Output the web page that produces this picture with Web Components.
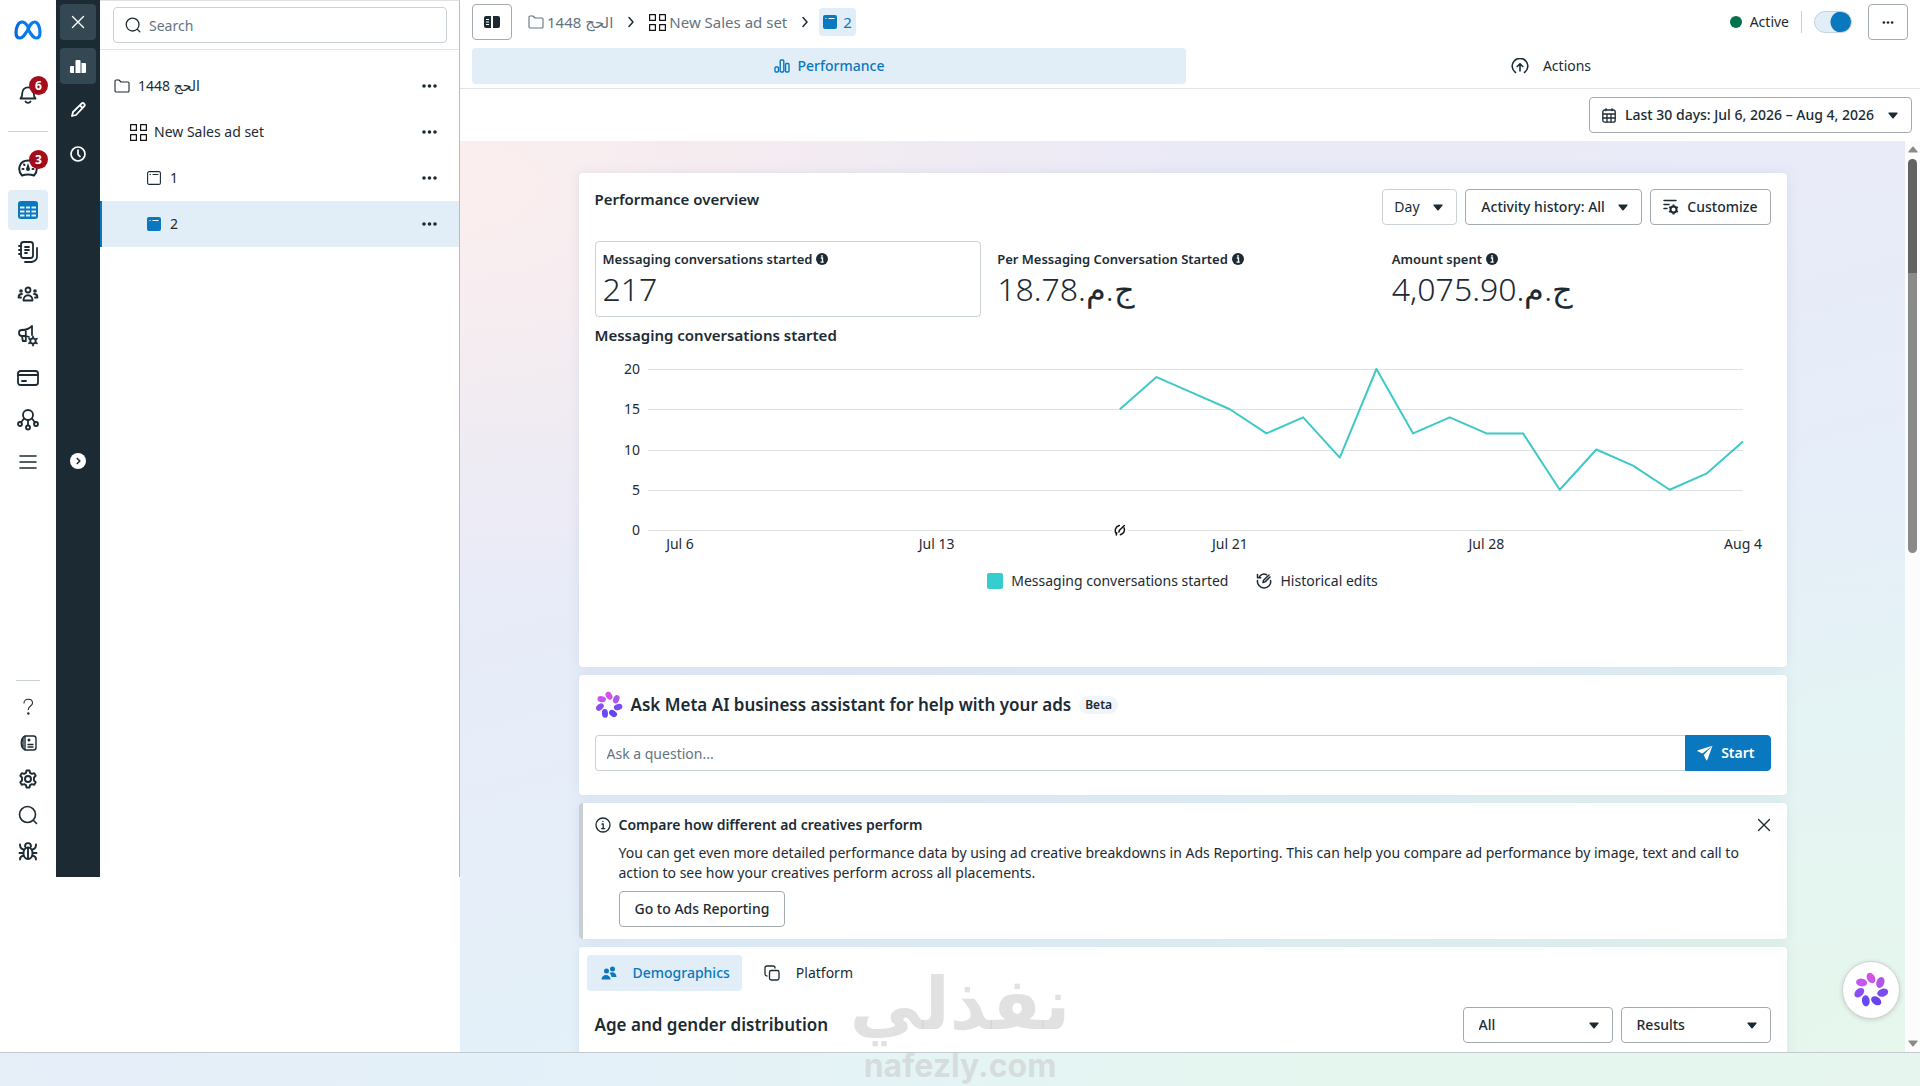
<!DOCTYPE html>
<html lang="en">
<head>
<meta charset="utf-8">
<meta name="viewport" content="width=device-width, initial-scale=1">
<title>Ads Manager</title>
<style>
  :root {
    --ink: #1c2b33;
    --muted: #65737e;
    --line: #cbd2d6;
    --line-strong: #a4abb0;
    --accent: #0a78be;
    --accent-soft: #e1edf7;
  }

  body {
    margin: 0;
    color: var(--ink);
    font: 14px/20px "Noto Sans", "DejaVu Sans", sans-serif;
  }
</style>
</head>
<body>
<ads-app></ads-app>

<script>
const stroke = (body, width = 2) =>
  `<g fill="none" stroke="currentColor" stroke-width="${width}" stroke-linecap="round" stroke-linejoin="round">${body}</g>`;

const gearPath = 'M8.5 1.5h3l.6 2.4 1.7 1 2.4-.7 1.5 2.6L16 8.500v3l1.700 1.700-1.500 2.600-2.400-.7-1.700 1-.6 2.400h-3l-.6-2.400-1.700-1-2.400.7-1.500-2.600L4 11.500v-3L2.300 6.800l1.500-2.600 2.400.7 1.700-1z';

const petals = ['#d052e6', '#b056ea', '#7a4cf0', '#6644ee', '#6a48f5', '#8a4ef5', '#c455f3']
  .map((color, i) => `<g transform="rotate(${i * 360 / 7})"><ellipse cx="0" cy="-12" rx="3.900" ry="5.600" fill="${color}" transform="rotate(-30 0 -12)"/></g>`)
  .join('');

// [viewBox, markup]
const ICONS = {
  meta: ['0 0 28 20', '<defs><linearGradient id="m" x1="0" x2="1"><stop offset="0" stop-color="#0668e1"/><stop offset=".5" stop-color="#0a7cf0"/><stop offset="1" stop-color="#0a7cf0"/></linearGradient></defs><path d="M14 6.500C12 3.500 10.500 2 8 2 4.500 2 2 7 2 12.500 2 16 3.500 18 6 18c3 0 5-3.500 8-8.500C16 5 17.500 2 20.500 2 24 2 26 7 26 12.500c0 3.500-1.500 5.500-3.800 5.500-2.700 0-4.200-2-8.200-8.700z" fill="none" stroke="url(#m)" stroke-width="3.200" stroke-linejoin="round"/>'],
  bell: ['0 0 20 20', stroke('<path d="M2.500 14.500C4 13 4.300 11.500 4.300 9a5.700 5.700 0 0 1 11.400 0c0 2.500.3 4 1.800 5.500z" stroke-width="1.800"/><path d="M7.500 17.500c1 1.800 4 1.800 5 0"/>', 1.8)],
  gauge: ['0 0 20 20', stroke('<path d="M4 17.500C-1 12 1 2.500 10 2.500s11 9.500 6 15c-4-1.200-8-1.200-12 0z"/><path d="M4.500 11h1M14.500 11h1M6 6.500l.5.500"/>') + '<path d="M10 5l2 6a2 2 0 1 1-4 0z" fill="currentColor"/>'],
  table: ['0 0 20 18', '<rect width="20" height="18" rx="3" fill="currentColor"/><path d="M2 5.500h4.500v2H2zM8 5.500h4v2H8zM13.500 5.500H18v2h-4.500zM2 9.500h4.500v2H2zM8 9.500h4v2H8zM13.500 9.500H18v2h-4.500zM2 13.500h4.500v2H2zM8 13.500h4v2H8zM13.500 13.500H18v2h-4.500z" fill="#e1edf7"/>'],
  notes: ['0 0 22 24', stroke('<rect x="4" y="2" width="12" height="16" rx="2.500"/><path d="M2 6h2M2 10h2M2 14h2M20 8v8a5.500 5.500 0 0 1-5.500 6H8M8 7h4M8 10h4M8 13h2"/>', 1.800)],
  people: ['0 0 22 16', stroke('<circle cx="11" cy="4" r="2.500"/><path d="M6.500 14.500c-.5-7 9.500-7 9 0zM1.500 11.500c0-3 1.500-3.500 3.500-3.500M1.500 11.500H4M20.500 11.500c0-3-1.500-3.500-3.500-3.500M20.500 11.500H18"/>', 1.800) + '<circle cx="4" cy="5" r="1.800" fill="currentColor"/><circle cx="18" cy="5" r="1.800" fill="currentColor"/>'],
  megaphone: ['0 0 22 22', stroke('<path d="M2 7.500C2 5.500 3.500 5 5 5c4 0 7-1 10-4v9M5 11c-2 0-3-1-3-3M5 11h4M5 11l.8 5h3V6M9 11l3 1" stroke-width="1.800"/><circle cx="16" cy="16" r="2.700"/><path d="M16 11.500v1M16 19.500v1M12.100 13.800l.9.500M19 17.700l.9.500M12.100 18.200l.9-.5M19 14.300l.9-.5"/>', 1.800)],
  card: ['0 0 22 16', stroke('<rect x="1" y="1" width="20" height="14" rx="2.500"/><path d="M1 5h20M5 11h4"/>', 1.800)],
  nodes: ['0 0 22 22', stroke('<circle cx="11" cy="6" r="5"/><path d="M11 11v5M7 9.500l-3 4M15 9.500l3 4"/><circle cx="11" cy="18.500" r="2"/><circle cx="3" cy="15" r="2"/><circle cx="19" cy="15" r="2"/>', 1.800)],
  menu: ['0 0 20 20', stroke('<path d="M2 4h16M2 10h16M2 16h16"/>', 1.600)],
  question: ['0 0 18 18', stroke('<path d="M5 5c0-5 8.500-5 8.500 0 0 3-4.200 3-4.200 6.500"/>', 1.100) + '<circle cx="9.300" cy="15.500" r="1.200" fill="currentColor"/>'],
  news: ['0 0 18 18', stroke('<path d="M6 2h8.500A2.500 2.500 0 0 1 17 4.500v9a2.500 2.500 0 0 1-2.500 2.500H6zM6 2C1 4.500 1 13.500 6 16M4 4v10M9 10.500h5M9 13h5"/><circle cx="10" cy="6" r=".8"/>', 1.400)],
  gear: ['0 0 20 20', stroke(`<path d="${gearPath}"/><circle cx="10" cy="10" r="3"/>`, 1.900)],
  search: ['0 0 20 20', stroke('<circle cx="9.500" cy="9.500" r="8"/><path d="M15.500 15.500l3 3"/>', 1.600)],
  bug: ['0 0 20 20', stroke('<path d="M10 18c-6 0-6-11.500 0-11.500S16 18 10 18zM10 7v11M7 5.500C7 1 13 1 13 5.500M1.500 12H5M15 12h3.500M2 3.500c0 3.500 1 4.500 3.500 5M18 3.500c0 3.500-1 4.500-3.500 5M2 18.500c0-2.500 1-3.500 3.500-4M18 18.500c0-2.500-1-3.500-3.500-4"/>', 1.900)],
  close: ['0 0 14 14', stroke('<path d="M1.500 1.500l11 11M12.500 1.500l-11 11"/>', 1.400)],
  bars: ['0 0 16 14', '<path d="M0 8a1 1 0 0 1 1-1h3v7H1a1 1 0 0 1-1-1zM5.500 2a1 1 0 0 1 1-1h3a1 1 0 0 1 1 1v12h-5zM11.500 4H15a1 1 0 0 1 1 1v8a1 1 0 0 1-1 1h-3.500z" fill="currentColor"/>'],
  barsOutline: ['0 0 16 14', stroke('<rect x="1" y="8" width="3.500" height="5" rx="1"/><rect x="6.200" y="1" width="3.600" height="12" rx="1"/><rect x="11.500" y="4.500" width="3.500" height="8.500" rx="1"/>', 1.400)],
  pencil: ['0 0 16 16', stroke('<path d="M2 14l1-4L11.500 1.700a1.600 1.600 0 0 1 2.600 2.600L6 13zM10 3.500L12.500 6"/>', 1.800)],
  clock: ['0 0 16 16', stroke('<circle cx="8" cy="8" r="7"/><path d="M8 4v4.500l2 2"/>', 1.700)],
  chevronCircle: ['0 0 16 16', '<circle cx="8" cy="8" r="8" fill="#fff"/><path d="M6.800 5l3 3-3 3" fill="none" stroke="#1c2b33" stroke-width="1.500"/>'],
  chevron: ['0 0 8 12', stroke('<path d="M2 1.500L6 6l-4 4.500"/>', 1.500)],
  folder: ['0 0 16 14', stroke('<path d="M1 2a1 1 0 0 1 1-1h3l2 2h7a1 1 0 0 1 1 1v8a1 1 0 0 1-1 1H2a1 1 0 0 1-1-1z"/>', 1.100)],
  grid: ['0 0 17 17', '<path d="M.6.6h5.800v5.800H.6zM10.600.6h5.800v5.800h-5.800zM.6 10.600h5.800v5.800H.6zM10.600 10.600h5.800v5.800h-5.800z" fill="none" stroke="#111" stroke-width="1.200" stroke-linejoin="round"/>'],
  window: ['0 0 14 14', stroke('<rect x=".6" y=".6" width="12.800" height="12.800" rx="1.500"/><path d="M3 3.500h.5M6 3.500h5"/>', 1.100)],
  windowFill: ['0 0 14 14', '<rect width="14" height="14" rx="2" fill="currentColor"/><path d="M2.500 3.500h1M5.500 3.500h6" stroke="#fff" stroke-width="1.200"/>'],
  dots: ['0 0 15 4', '<g fill="currentColor"><circle cx="2" cy="2" r="1.800"/><circle cx="7.500" cy="2" r="1.800"/><circle cx="13" cy="2" r="1.800"/></g>'],
  panel: ['0 0 16 12', '<path d="M2 0h5v12H2a2 2 0 0 1-2-2V2a2 2 0 0 1 2-2zM9 0h5a2 2 0 0 1 2 2v8a2 2 0 0 1-2 2H9z" fill="currentColor"/><path d="M2 3.500h3M2 6h3M2 8.500h3" stroke="#fff" stroke-width="1.200"/>'],
  upload: ['0 0 18 16', stroke('<path d="M4.500 14.500a7.800 7.800 0 1 1 9 0M9 13V6M6.200 8.500L9 5.700l2.800 2.800"/>', 1.600)],
  calendar: ['0 0 14 15', stroke('<rect x=".8" y="2" width="12.400" height="12.200" rx="2"/><path d="M1 6h12M1 10h12M5 6v8M9 6v8M4 .7v2M10 .7v2"/>', 1.300)],
  caret: ['0 0 10 7', '<path d="M1 .5h8a.6.6 0 0 1 .5 1L5.600 6.200a.8.8 0 0 1-1.200 0L.5 1.500A.6.6 0 0 1 1 .5z" fill="currentColor"/>'],
  customize: ['0 0 16 16', stroke('<path d="M1 1.500h12M1 5.500h5M1 9.500h3"/>', 1.500) + '<circle cx="10.500" cy="10.500" r="3" fill="none" stroke="currentColor" stroke-width="2"/><path d="M10.500 5.500v2M10.500 13.500v2M6.200 8l1.700 1M13.100 12l1.700 1M6.200 13l1.700-1M13.100 9l1.700-1" stroke="currentColor" stroke-width="2"/>'],
  infoFill: ['0 0 12 12', '<circle cx="6" cy="6" r="6" fill="currentColor"/><path d="M4.800 5h1.700v4M4.500 9.200h3.200" stroke="#fff" stroke-width="1.300" fill="none"/><circle cx="6" cy="2.900" r=".9" fill="#fff"/>'],
  info: ['0 0 16 16', stroke('<circle cx="8" cy="8" r="7"/><path d="M7 7h1.200v4.500M6.500 11.600h3.200"/><path d="M8 4.300v.2"/>', 1.300)],
  history: ['0 0 16 16', stroke('<path d="M3.500 3.500C6 .5 9 1 10.500 1.700M1.500 1.500v3.200h3.200M1.500 7.500C.8 11 4 15 8 15s7.500-3.500 6.500-7.500M7 9.500l.5-2.200L13 2M7 9.500l2-.6L14 4"/>', 1.500)],
  edit: ['0 0 12 12', stroke('<path d="M2 9C.5 6.500 1.500 2.500 5.500 1.500M10.300 4c1 3-.5 6-3.800 6.700M5 8l.6-1.800L10.500 1.500M2.500 11l.3-2.200" stroke="#111"/>', 1.500)],
  send: ['0 0 16 16', '<path d="M15.500.7L.8 5.200a.6.6 0 0 0-.1 1.100l4.600 2.200zM15.500.7L10.300 15a.6.600 0 0 1-1.100.1L6.700 10z" fill="currentColor"/>'],
  users: ['0 0 16 14', '<g fill="currentColor"><circle cx="5.500" cy="5" r="2.500"/><circle cx="11.500" cy="3" r="2.500"/><path d="M.5 13.500c0-6 9-6 9 0zM8.500 7c3-2 7-.5 7 4h-5C10.300 9 9.500 8 8.500 7z"/></g>'],
  copy: ['0 0 16 16', stroke('<rect x="5.500" y="5.500" width="9.500" height="9.500" rx="1.800"/><path d="M3 11a2 2 0 0 1-2-2V3a2 2 0 0 1 2-2h6a2 2 0 0 1 2 2"/>', 1.300)],
  assistant: ['-18 -18 36 36', petals]
};

class BaseElement extends HTMLElement {
  connectedCallback() {
    if (this.shadowRoot) return;
    this.attachShadow({ mode: 'open' });
    const template = document.createElement('template');
    template.innerHTML = this.template();
    this.shadowRoot.appendChild(template.content.cloneNode(true));
  }

  attr(name, fallback = '') {
    return this.getAttribute(name) || fallback;
  }
}

class UiIcon extends BaseElement {
  template() {
    const [box, body] = ICONS[this.attr('name')];
    const size = box.split(' ').map(Number);
    const width = Number(this.attr('width', size[2]));
    const height = Math.round(width * size[3] / size[2]);
    return `
      <style>
        :host { display: inline-flex; flex: none; }
        svg { flex: none; }
      </style>
      <svg viewBox="${box}" width="${width}" height="${height}" aria-hidden="true">${body}</svg>
    `;
  }
}

class UiButton extends BaseElement {
  template() {
    return `
      <style>
        :host { display: inline-flex; flex: none; }
        button {
          display: flex;
          align-items: center;
          justify-content: center;
          gap: 8px;
          box-sizing: border-box;
          height: 36px;
          min-width: 40px;
          padding: 0 var(--pad, 15px);
          border: 1px solid var(--line-strong);
          border-radius: 4px;
          background: #fff;
          color: var(--ink);
          font: inherit;
          font-weight: 500;
        }
        :host([variant="primary"]) button {
          border-color: var(--accent);
          border-radius: 0 4px 4px 0;
          background: var(--accent);
          color: #fff;
          font-weight: 600;
          padding: 0 15px 0 11px;
        }
        :host([variant="plain"]) button {
          min-width: 0;
          height: 20px;
          padding: 0;
          border: 0;
          background: none;
        }
      </style>
      <button type="button" aria-label="${this.attr('label')}"><slot></slot></button>
    `.replace('aria-label=""', '');
  }
}

class UiSelect extends BaseElement {
  template() {
    const icon = this.attr('icon');
    return `
      <style>
        :host { display: inline-grid; flex: none; align-items: center; }
        select, .caret, .icon { grid-area: 1 / 1; }
        select {
          appearance: none;
          box-sizing: border-box;
          width: 100%;
          height: 36px;
          margin: 0;
          padding: 0 36px 0 ${icon ? 35 : this.attr('pad', '15')}px;
          border: 1px solid var(--select-line, var(--line-strong));
          border-radius: 4px;
          background: #fff;
          color: var(--ink);
          font: inherit;
          font-weight: var(--select-weight, 500);
        }
        .caret { justify-self: end; margin-right: 14px; pointer-events: none; }
        .icon { justify-self: start; margin-left: 13px; pointer-events: none; }
      </style>
      <select aria-label="${this.attr('label')}"><option>${this.attr('value')}</option></select>
      ${icon ? `<ui-icon class="icon" name="${icon}"></ui-icon>` : ''}
      <ui-icon class="caret" name="caret"></ui-icon>
    `;
  }
}

class UiCard extends BaseElement {
  template() {
    return `
      <style>
        :host {
          display: block;
          border-radius: 4px;
          background: #fff;
          box-shadow: 0 0 12px rgba(60, 110, 160, .1);
        }
      </style>
      <slot></slot>
    `;
  }
}

class SideNav extends BaseElement {
  template() {
    const item = (name, label, extra = '') =>
      `<a href="#" class="${extra}" aria-label="${label}"><ui-icon name="${name}"></ui-icon></a>`;
    return `
      <style>
        :host {
          display: flex;
          flex-direction: column;
          box-sizing: border-box;
          width: 56px;
          padding: 10px 8px 8px;
          background: #fff;
        }
        nav { display: flex; flex-direction: column; gap: 2px; }
        nav.bottom { gap: 0; margin-top: auto; }
        a {
          display: flex;
          align-items: center;
          justify-content: center;
          height: 40px;
          border-radius: 4px;
          color: var(--ink);
        }
        a.active { background: var(--accent-soft); color: var(--accent); }
        .bottom a { height: 36px; }
        .badged { display: grid; grid-template: 40px / 40px; place-items: center; }
        .badged > * { grid-area: 1 / 1; }
        .badge {
          place-self: start end;
          margin-top: 2px;
          width: 19px;
          height: 19px;
          border-radius: 50%;
          background: #a30d1c;
          color: #fff;
          font-size: 12px;
          line-height: 19px;
          font-weight: 700;
          text-align: center;
        }
        hr { width: 100%; margin: 15px 0 14px; border: 0; border-top: 1px solid var(--line); }
        .bottom hr { width: 24px; margin: 0 auto 8px; }
        .alerts { margin-top: 22px; }
      </style>
      <nav aria-label="Main">
        ${item('meta', 'Home')}
        <a href="#" class="badged alerts" aria-label="Notifications"><ui-icon name="bell"></ui-icon><span class="badge">6</span></a>
        <hr>
        <a href="#" class="badged" aria-label="Account overview"><ui-icon name="gauge"></ui-icon><span class="badge">3</span></a>
        ${item('table', 'Campaigns', 'active')}
        ${item('notes', 'Ads Reporting')}
        ${item('people', 'Audiences')}
        ${item('megaphone', 'Advertising settings')}
        ${item('card', 'Billing')}
        ${item('nodes', 'Events Manager')}
        ${item('menu', 'All tools')}
      </nav>
      <nav class="bottom" aria-label="Support">
        <hr>
        ${item('question', 'Help')}
        ${item('news', 'News')}
        ${item('gear', 'Settings')}
        ${item('search', 'Search')}
        ${item('bug', 'Report a problem')}
      </nav>
    `;
  }
}

class ToolRail extends BaseElement {
  template() {
    return `
      <style>
        :host {
          display: flex;
          flex-direction: column;
          box-sizing: border-box;
          width: 44px;
          padding: 4px;
          background: #1c2b33;
        }
        button {
          display: flex;
          align-items: center;
          justify-content: center;
          flex: none;
          width: 36px;
          height: 36px;
          padding: 0;
          border: 0;
          border-radius: 4px;
          background: none;
          color: #fff;
        }
        .on { background: #344854; }
        .expand { margin: auto 0; }
        .top { display: flex; flex-direction: column; gap: 8px; height: 44px; }
      </style>
      <div class="top">
        <button class="on" aria-label="Close"><ui-icon name="close"></ui-icon></button>
        <button class="on" aria-label="Charts"><ui-icon name="bars"></ui-icon></button>
        <button aria-label="Edit"><ui-icon name="pencil"></ui-icon></button>
        <button aria-label="History"><ui-icon name="clock"></ui-icon></button>
      </div>
      <button class="expand" aria-label="Expand"><ui-icon name="chevronCircle"></ui-icon></button>
    `;
  }
}

class TreeRow extends BaseElement {
  template() {
    return `
      <style>
        :host {
          display: flex;
          align-items: center;
          gap: 8px;
          box-sizing: border-box;
          height: 46px;
          padding: 0 22px 0 calc(14px + 16px * var(--level, 0));
        }
        :host([selected]) {
          background: var(--accent-soft);
          box-shadow: inset 2px 0 var(--accent);
        }
        .kind { width: 16px; justify-content: center; }
        :host([selected]) .kind { color: var(--accent); }
        button {
          display: flex;
          margin-left: auto;
          padding: 8px 0;
          border: 0;
          background: none;
          color: var(--ink);
        }
      </style>
      <ui-icon class="kind" name="${this.attr('icon')}"></ui-icon>
      <span><slot></slot></span>
      <button type="button" aria-label="More"><ui-icon name="dots"></ui-icon></button>
    `;
  }
}

class AdTree extends BaseElement {
  template() {
    return `
      <style>
        :host {
          display: block;
          box-sizing: border-box;
          width: 360px;
          border-top: 1px solid #dfe3e6;
          border-right: 1px solid #b8bcc0;
          background: #fff;
        }
        .search {
          display: grid;
          align-items: center;
          padding: 6px 12px 6px 13px;
          border-bottom: 1px solid #e2e5e8;
        }
        .search > * { grid-area: 1 / 1; }
        .search ui-icon { margin-left: 12px; }
        input {
          box-sizing: border-box;
          width: 100%;
          height: 36px;
          padding: 0 12px 0 35px;
          border: 1px solid var(--line);
          border-radius: 4px;
          color: var(--ink);
          font: inherit;
        }
        input::placeholder { color: var(--muted); }
        .rows { padding-top: 13px; }
      </style>
      <div class="search">
        <input type="text" placeholder="Search" aria-label="Search">
        <ui-icon name="search" width="16"></ui-icon>
      </div>
      <div class="rows">
        <tree-row icon="folder">الحج 1448</tree-row>
        <tree-row icon="grid" style="--level: 1">New Sales ad set</tree-row>
        <tree-row icon="window" style="--level: 2">1</tree-row>
        <tree-row icon="windowFill" style="--level: 2" selected>2</tree-row>
      </div>
    `;
  }
}

class PageHeader extends BaseElement {
  template() {
    return `
      <style>
        :host { display: block; background: #fff; }
        .bar {
          display: flex;
          align-items: center;
          gap: 16px;
          padding: 4px 12px;
        }
        .crumbs { display: flex; align-items: center; gap: 14px; }
        .crumbs a {
          display: flex;
          align-items: center;
          gap: 3px;
          color: var(--muted);
          font-size: 15px;
          text-decoration: none;
        }
        .crumbs a.here {
          gap: 6px;
          height: 28px;
          margin-left: -4px;
          padding: 0 4px;
          border-radius: 4px;
          background: var(--accent-soft);
          color: var(--accent);
        }
        .crumbs ui-icon[name="chevron"] { color: var(--ink); }
        .status { display: flex; align-items: center; margin-left: auto; }
        .dot { width: 12px; height: 12px; margin-right: 8px; border-radius: 50%; background: #04724d; }
        .rule { width: 1px; height: 22px; margin: 0 12px; background: var(--line); }
        input {
          appearance: none;
          box-sizing: border-box;
          width: 38px;
          height: 22px;
          margin: 0;
          border: 1px solid #c3d2de;
          border-radius: 11px;
          background: radial-gradient(circle at 26px 10px, var(--accent) 10px, #e1edf7 11px);
        }
        .tabs {
          display: grid;
          grid-template-columns: 1fr 1fr;
          gap: 8px;
          padding: 4px 12px;
          border-bottom: 1px solid #e2e5e8;
        }
        .tabs button {
          display: flex;
          align-items: center;
          justify-content: center;
          gap: 8px;
          height: 36px;
          padding: 0;
          border: 0;
          border-radius: 4px;
          background: none;
          color: var(--ink);
          font: inherit;
        }
        .tabs button + button { gap: 14px; }
        .tabs .on { background: var(--accent-soft); color: var(--accent); font-weight: 500; }
        .range { display: flex; justify-content: flex-end; padding: 8px; }
      </style>
      <div class="bar">
        <ui-button label="Toggle panel" style="--pad: 0"><ui-icon name="panel"></ui-icon></ui-button>
        <nav class="crumbs" aria-label="Breadcrumb">
          <a href="#"><ui-icon name="folder"></ui-icon><span>الحج 1448</span></a>
          <ui-icon name="chevron"></ui-icon>
          <a href="#"><ui-icon name="grid"></ui-icon>New Sales ad set</a>
          <ui-icon name="chevron"></ui-icon>
          <a href="#" class="here"><ui-icon name="windowFill"></ui-icon>2</a>
        </nav>
        <div class="status">
          <span class="dot"></span>
          <label for="active">Active</label>
          <span class="rule"></span>
          <input id="active" type="checkbox" role="switch" checked>
        </div>
        <ui-button label="More" style="--pad: 0"><ui-icon name="dots" width="12"></ui-icon></ui-button>
      </div>
      <div class="tabs" role="tablist">
        <button class="on" role="tab" aria-selected="true"><ui-icon name="barsOutline"></ui-icon>Performance</button>
        <button role="tab"><ui-icon name="upload"></ui-icon>Actions</button>
      </div>
      <div class="range">
        <ui-select icon="calendar" label="Date range" value="Last 30 days: Jul 6, 2026 – Aug 4, 2026"></ui-select>
      </div>
    `;
  }
}

class MetricTile extends BaseElement {
  template() {
    return `
      <style>
        :host {
          display: block;
          box-sizing: border-box;
          height: 76px;
          padding: 7px;
          border: 1px solid transparent;
          border-radius: 4px;
        }
        :host([selected]) { border-color: var(--line); }
        .label { display: flex; align-items: center; gap: 4px; font-size: 13px; font-weight: 600; }
        .value { font-size: 32px; line-height: 40px; font-weight: 300; }
      </style>
      <div class="label">${this.attr('label')}<ui-icon name="infoFill"></ui-icon></div>
      <div class="value"><slot></slot></div>
    `;
  }
}

class LineChart extends BaseElement {
  template() {
    const values = JSON.parse(this.attr('values'));
    const start = Number(this.attr('start'));
    const days = 30;
    const top = 24;
    const plot = 161;
    // the first day sits a little in from the axis, the last one on the right edge
    const x = (day) => 32 + day * (1095 - 32) / (days - 1);
    const percent = (day) => x(day) / 10.95 + '%';
    const y = (value) => plot - value * plot / 20;
    const ticks = [20, 15, 10, 5, 0].map((value) => {
      const at = Math.round(top + y(value));
      return `<line x1="0" x2="100%" y1="${at}.5" y2="${at}.5"/><text class="y" x="-8" y="${at + 5}">${value}</text>`;
    }).join('');
    const labels = [[0, 'Jul 6'], [7, 'Jul 13'], [15, 'Jul 21'], [22, 'Jul 28'], [29, 'Aug 4']]
      .map(([day, text]) => `<text class="x" x="${percent(day)}" y="204">${text}</text>`).join('');
    const points = values.map((value, i) => `${x(start + i)},${y(value)}`).join(' ');
    return `
      <style>
        :host { display: block; }
        .plot { margin: 0 28px 0 53px; }
        .plot > svg { display: block; width: 100%; height: 210px; overflow: visible; }
        line { stroke: #dfe1e3; }
        text { fill: var(--ink); }
        .y { text-anchor: end; }
        .x { text-anchor: middle; }
        .series { fill: none; stroke: #3ec8c8; stroke-width: 2; stroke-linejoin: round; vector-effect: non-scaling-stroke; }
        .legend { display: flex; justify-content: center; gap: 28px; margin-top: 16px; }
        .legend span { display: flex; align-items: center; gap: 8px; }
        .swatch { width: 16px; height: 16px; border-radius: 2px; background: #35cdcd; }
      </style>
      <div class="plot">
        <svg role="img" aria-label="${this.attr('label')}">
          ${ticks}
          ${labels}
          <svg y="${top}" width="100%" height="${plot}" viewBox="0 0 1095 ${plot}" preserveAspectRatio="none" overflow="visible">
            <polyline class="series" points="${points}"/>
          </svg>
          <svg x="${percent(start)}" y="${top + plot}" overflow="visible">
            <g transform="translate(-6 -6)">
              <circle cx="6" cy="6" r="8" fill="#fff"/>
              ${ICONS.edit[1]}
            </g>
          </svg>
        </svg>
      </div>
      <div class="legend">
        <span><i class="swatch"></i>${this.attr('label')}</span>
        <span><ui-icon name="history"></ui-icon>Historical edits</span>
      </div>
    `;
  }
}

class OverviewCard extends BaseElement {
  template() {
    return `
      <style>
        :host { display: block; }
        .body { padding: 16px 16px 76px; }
        header { display: flex; gap: 8px; margin-bottom: 16px; }
        h2, h3 { margin: 0; font-size: 15px; line-height: 20px; font-weight: 600; }
        h2 { margin-right: auto; }
        h3 { margin-top: 8px; }
        .metrics { display: grid; grid-template-columns: repeat(3, 1fr); gap: 8px; }
      </style>
      <ui-card><div class="body">
        <header>
          <h2>Performance overview</h2>
          <ui-select label="Breakdown" value="Day" pad="11" style="--select-line: var(--line); --select-weight: 400"></ui-select>
          <ui-select label="Activity history" value="Activity history: All"></ui-select>
          <ui-button style="--pad: 12px"><ui-icon name="customize"></ui-icon>Customize</ui-button>
        </header>
        <div class="metrics">
          <metric-tile label="Messaging conversations started" selected>217</metric-tile>
          <metric-tile label="Per Messaging Conversation Started">ج.م.18.78</metric-tile>
          <metric-tile label="Amount spent">ج.م.4,075.90</metric-tile>
        </div>
        <h3>Messaging conversations started</h3>
        <line-chart label="Messaging conversations started" start="12"
          values="[15,19,17,15,12,14,9,20,12,14,12,12,5,10,8,5,7,11]"></line-chart>
      </div></ui-card>
    `;
  }
}

class AssistantCard extends BaseElement {
  template() {
    return `
      <style>
        :host { display: block; }
        .body { padding: 16px 16px 24px; }
        header { display: flex; align-items: center; gap: 8px; height: 28px; margin-bottom: 16px; }
        h2 { margin: 0; font-size: 17px; line-height: 24px; font-weight: 600; }
        .beta {
          padding: 0 6px;
          border-radius: 9px;
          background: #f0f5fa;
          font-size: 12px;
          line-height: 18px;
          font-weight: 600;
        }
        form { display: flex; }
        input {
          flex: 1;
          box-sizing: border-box;
          height: 36px;
          padding: 0 11px;
          border: 1px solid var(--line);
          border-right: 0;
          border-radius: 4px 0 0 4px;
          color: var(--ink);
          font: inherit;
        }
        input::placeholder { color: var(--muted); }
      </style>
      <ui-card><div class="body">
        <header>
          <ui-icon name="assistant" width="28"></ui-icon>
          <h2>Ask Meta AI business assistant for help with your ads</h2>
          <span class="beta">Beta</span>
        </header>
        <form>
          <input type="text" placeholder="Ask a question..." aria-label="Ask a question">
          <ui-button variant="primary"><ui-icon name="send"></ui-icon>Start</ui-button>
        </form>
      </div></ui-card>
    `;
  }
}

class TipCard extends BaseElement {
  template() {
    return `
      <style>
        :host { display: block; }
        .body {
          display: grid;
          grid-template-columns: 16px 1fr 14px;
          gap: 8px;
          padding: 12px 16px 12px 12px;
          border-left: 4px solid #c8ced2;
          border-radius: 4px;
        }
        .body > ui-icon, .body > ui-button { height: 20px; align-items: center; }
        h2 { margin: 0; font-size: 14px; line-height: 20px; font-weight: 600; }
        p { margin: 0; }
        .text { grid-column: 2; display: grid; justify-items: start; gap: 8px; }
      </style>
      <ui-card><div class="body">
        <ui-icon name="info"></ui-icon>
        <h2>Compare how different ad creatives perform</h2>
        <ui-button variant="plain" label="Dismiss"><ui-icon name="close"></ui-icon></ui-button>
        <div class="text">
          <p>You can get even more detailed performance data by using ad creative breakdowns in Ads Reporting. This can help you compare ad performance by image, text and call to action to see how your creatives perform across all placements.</p>
          <ui-button>Go to Ads Reporting</ui-button>
        </div>
      </div></ui-card>
    `;
  }
}

class AudienceCard extends BaseElement {
  template() {
    return `
      <style>
        :host { display: block; }
        .body { padding: 8px 16px 240px 8px; }
        .tabs { display: flex; gap: 8px; margin-bottom: 16px; }
        .tabs button {
          display: flex;
          align-items: center;
          gap: 16px;
          height: 36px;
          padding: 0 12px 0 14px;
          border: 0;
          border-radius: 4px;
          background: none;
          color: var(--ink);
          font: inherit;
        }
        .tabs .on { background: var(--accent-soft); color: var(--accent); font-weight: 500; }
        .row { display: flex; align-items: center; gap: 8px; padding-left: 8px; }
        h2 { margin: 0 auto 0 0; font-size: 17px; line-height: 24px; font-weight: 600; }
        ui-select { width: 150px; }
      </style>
      <ui-card><div class="body">
        <div class="tabs" role="tablist">
          <button class="on" role="tab" aria-selected="true"><ui-icon name="users"></ui-icon>Demographics</button>
          <button role="tab"><ui-icon name="copy"></ui-icon>Platform</button>
        </div>
        <div class="row">
          <h2>Age and gender distribution</h2>
          <ui-select label="Breakdown" value="All"></ui-select>
          <ui-select label="Metric" value="Results"></ui-select>
        </div>
      </div></ui-card>
    `;
  }
}

class ScrollTrack extends BaseElement {
  template() {
    return `
      <style>
        :host {
          display: flex;
          flex-direction: column;
          align-items: center;
          flex: none;
          box-sizing: border-box;
          width: 15px;
          padding: 5px 0;
          background: #fcfcfc;
          color: #8a8a8a;
        }
        .up { transform: rotate(180deg); }
        .lane { flex: 1; width: 9px; margin: 6px 0; }
        .thumb {
          height: 45%;
          border-radius: 5px;
          background: linear-gradient(#636363 29%, #8a8a8a 29%);
        }
      </style>
      <ui-icon class="up" name="caret"></ui-icon>
      <div class="lane"><div class="thumb"></div></div>
      <ui-icon name="caret"></ui-icon>
    `;
  }
}

class AdsApp extends BaseElement {
  template() {
    return `
      <style>
        :host {
          position: relative;
          display: flex;
          flex-direction: column;
          height: 100vh;
          overflow: hidden;
          background: linear-gradient(90deg, #e6eef8, #e4f1f9 30%, #e5f6f0 65%, #e6f6ee);
        }
        .frame {
          display: flex;
          flex: 1;
          min-height: 0;
          margin-bottom: 33px;
          border-bottom: 1px solid #c3cbd1;
          background: #fff;
        }
        .side { display: flex; flex: none; margin-bottom: 175px; }
        main { display: flex; flex-direction: column; flex: 1; min-width: 0; }
        .scroll { display: flex; flex: 1; min-height: 0; }
        .content {
          flex: 1;
          min-width: 0;
          overflow: hidden;
          padding: 32px 16px 0;
          background:
            radial-gradient(ellipse 50% 45% at 0 5%, #fbeeee, transparent),
            radial-gradient(ellipse 75% 60% at 100% 100%, #e6f7ec, transparent),
            linear-gradient(165deg, #ece9f5, #e7ebf8 40%, #e4f1f9 72%);
        }
        .cards {
          display: flex;
          flex-direction: column;
          gap: 8px;
          max-width: 1208px;
          margin: 0 auto;
        }
        .fab {
          position: absolute;
          right: 20px;
          bottom: 67px;
          display: flex;
          align-items: center;
          justify-content: center;
          width: 58px;
          height: 58px;
          padding: 0;
          border: 1px solid #d0d4d8;
          border-radius: 50%;
          background: #fff;
          box-shadow: 0 1px 5px rgba(0, 0, 0, .15);
        }
        .mark {
          position: absolute;
          left: 50%;
          bottom: 0;
          transform: translateX(-50%);
          color: rgba(205, 205, 205, .6);
          font-family: "DejaVu Sans", sans-serif;
          font-weight: 700;
          text-align: center;
          pointer-events: none;
        }
        .mark b { display: block; font-size: 72px; line-height: 84px; }
        .mark span { display: block; font: 700 32px/40px Inter, sans-serif; }
      </style>
      <div class="frame">
        <div class="side">
          <side-nav></side-nav>
          <tool-rail></tool-rail>
          <ad-tree></ad-tree>
        </div>
        <main>
          <page-header></page-header>
          <div class="scroll">
            <div class="content">
              <div class="cards">
                <overview-card></overview-card>
                <assistant-card></assistant-card>
                <tip-card></tip-card>
                <audience-card></audience-card>
              </div>
            </div>
            <scroll-track></scroll-track>
          </div>
        </main>
      </div>
      <button class="fab" type="button" aria-label="Open assistant"><ui-icon name="assistant" width="36"></ui-icon></button>
      <div class="mark"><b>نفذلي</b><span>nafezly.com</span></div>
    `;
  }
}

customElements.define('ui-icon', UiIcon);
customElements.define('ui-button', UiButton);
customElements.define('ui-select', UiSelect);
customElements.define('ui-card', UiCard);
customElements.define('side-nav', SideNav);
customElements.define('tool-rail', ToolRail);
customElements.define('tree-row', TreeRow);
customElements.define('ad-tree', AdTree);
customElements.define('page-header', PageHeader);
customElements.define('metric-tile', MetricTile);
customElements.define('line-chart', LineChart);
customElements.define('overview-card', OverviewCard);
customElements.define('assistant-card', AssistantCard);
customElements.define('tip-card', TipCard);
customElements.define('audience-card', AudienceCard);
customElements.define('scroll-track', ScrollTrack);
customElements.define('ads-app', AdsApp);
</script>
</body>
</html>
